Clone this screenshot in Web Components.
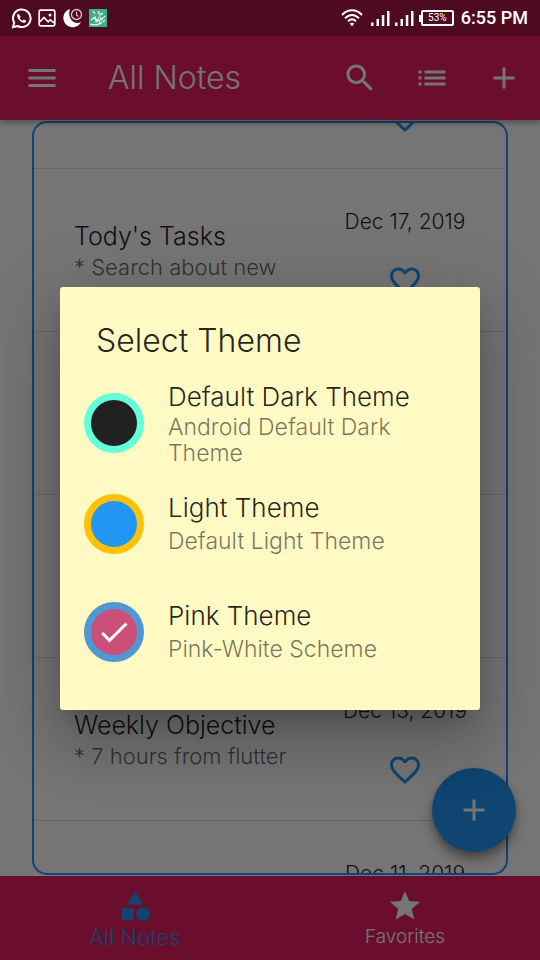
<!DOCTYPE html>
<html lang="en">
<head>
<meta charset="utf-8">
<meta name="viewport" content="width=device-width, initial-scale=1">
<title>All Notes</title>
<style>
  body { margin: 0; background: #fff; font-family: Inter, "Open Sans", sans-serif; font-weight: 300; color: rgba(0,0,0,.87); }
</style>
</head>
<body>
<notes-app></notes-app>

<script>
const define = (name, html, setup) => {
  const tpl = document.createElement('template');
  tpl.innerHTML = '<style>*{box-sizing:border-box}svg{display:block;fill:currentColor}</style>' + html;
  customElements.define(name, class extends HTMLElement {
    constructor() {
      super();
      this.attachShadow({ mode: 'open' }).append(tpl.content.cloneNode(true));
    }
    connectedCallback() { if (setup) setup(this, this.shadowRoot); }
  });
};

const ICONS = {
  menu: 'M3 18h18v-2H3v2zm0-5h18v-2H3v2zm0-7v2h18V6H3z',
  search: 'M15.5 14h-.79l-.28-.27C15.41 12.59 16 11.11 16 9.5 16 5.91 13.09 3 9.5 3S3 5.91 3 9.5 5.91 16 9.5 16c1.61 0 3.09-.59 4.23-1.57l.27.28v.79l5 4.99L20.49 19l-4.99-5zm-6 0C7.01 14 5 11.99 5 9.5S7.01 5 9.5 5 14 7.01 14 9.5 11.99 14 9.5 14z',
  list: 'M3 13h2v-2H3v2zm0 4h2v-2H3v2zm0-8h2V7H3v2zm4 4h14v-2H7v2zm0 4h14v-2H7v2zM7 7v2h14V7H7z',
  add: 'M19 13h-6v6h-2v-6H5v-2h6V5h2v6h6v2z',
  heart: 'M16.5 3c-1.74 0-3.41.81-4.5 2.09C10.91 3.81 9.24 3 7.5 3 4.42 3 2 5.42 2 8.5c0 3.78 3.4 6.86 8.55 11.54L12 21.35l1.45-1.32C18.6 15.36 22 12.28 22 8.5 22 5.42 19.58 3 16.5 3zm-4.4 15.55l-.1.1-.1-.1C7.14 14.24 4 11.39 4 8.5 4 6.5 5.5 5 7.5 5c1.54 0 3.04.99 3.57 2.36h1.87C13.46 5.99 14.96 5 16.5 5c2 0 3.5 1.5 3.5 3.5 0 2.89-3.14 5.74-7.9 10.05z',
  category: 'M12 2l-5.5 9h11zM17.5 13a4.5 4.5 0 1 0 0 9a4.5 4.5 0 1 0 0-9zM3 13.5h8v8H3z',
  star: 'M12 17.27L18.18 21l-1.64-7.03L22 9.24l-7.19-.61L12 2 9.19 8.63 2 9.24l5.46 4.73L5.82 21z',
  check: 'M9 16.17L4.83 12l-1.42 1.41L9 19 21 7l-1.41-1.41z'
};

define('md-icon', `
  <style>:host{display:block;width:36px;height:36px}svg{width:100%;height:100%}</style>
  <svg viewBox="0 0 24 24" aria-hidden="true"><path/></svg>`,
  (el, root) => root.querySelector('path').setAttribute('d', ICONS[el.getAttribute('name')]));

define('status-bar', `
  <style>
    :host{display:flex;align-items:center;justify-content:space-between;height:36px;padding:0 12px 0 11px;background:#4e0a20;color:#fff;font:500 18px/24px Roboto,sans-serif}
    div{display:flex;align-items:center}
    .left{gap:6px}
    .right{gap:5px}
    .battery::before{content:"";width:2px;height:7px;background:#fff}
    .battery span{border:2px solid #fff;border-radius:2px;width:33px;height:16px;font-size:10px;line-height:12px;text-align:center;font-weight:400}
    .wifi{margin-right:3px}
    time{margin-left:2px}
  </style>
  <div class="left">
    <svg width="21" height="21" viewBox="0 0 21 21"><path d="M2 19.2l1.2-4.6A8.8 8.8 0 1 1 6.7 18z" fill="none" stroke="#fff" stroke-width="2"/><path d="M7.4 5.7c-.8.2-1.5 1.2-1.3 2.3.5 3.2 3.5 6.2 6.8 6.7 1.2.1 2.2-.7 2.3-1.9l-2.5-1.3-1.1 1.2c-1.3-.5-2.3-1.5-2.9-2.8l1-1.2z"/></svg>
    <svg width="18" height="18" viewBox="0 0 18 18"><rect x="1.2" y="1.2" width="15.6" height="15.6" rx="1.5" fill="none" stroke="#fff" stroke-width="1.7"/><path d="M2 12.8l4-4.3 4.2 4.3 2-2 3.8 3" fill="none" stroke="#fff" stroke-width="1.6"/><circle cx="12" cy="6" r="1.5"/></svg>
    <svg width="21" height="20" viewBox="0 0 21 20"><path d="M8 1A9.3 9.3 0 1 0 19 14C13 17.500 4.500 11 8 1z"/><circle cx="14.500" cy="6.500" r="5" fill="none" stroke="#dcc4cc" stroke-width="1.3"/><path d="M14.500 3.500v3.500l2 1.500" fill="none" stroke="#dcc4cc" stroke-width="1.2"/></svg>
    <svg width="18" height="18" viewBox="0 0 18 18"><path fill="#35b18f" d="M0 0h18v18H0z"/><path d="M1 15c5 2 12 0 15-4M2 11l4-3 1 4 4-5 1 4 4-4M10 2c-2 3 2 4 4 2M4 2l2 3M7 13l3-2 1 4" fill="none" stroke="#e5f2e8" stroke-width="1.3"/><path d="M3 5l3 1M7 3l1 4M13 13l3 1M8 9l5-2" fill="none" stroke="#9a8a58" stroke-width="1"/></svg>
  </div>
  <div class="right">
    <svg class="wifi" width="22" height="18" viewBox="0 0 22 18"><g fill="none" stroke="#fff" stroke-width="1.9"><path d="M1 6C7-.3 15-.3 21 6"/><path d="M4 9.3C8.400 4.800 13.600 4.800 18 9.300"/><path d="M7 12.300c2.600-2.600 5.400-2.600 8 0"/></g><path d="M11 17.300l-2.300-2.600c1.400-1.300 3.200-1.300 4.600 0z"/></svg>
    <svg width="19" height="16" viewBox="0 0 19 16"><path d="M0 12.500h2.500V16H0zM5.500 9H8v7H5.500zM10.800 5h2.500v11h-2.500zM16 1h2.500v15H16z"/></svg>
    <svg width="19" height="16" viewBox="0 0 19 16"><path d="M0 12.500h2.500V16H0zM5.500 9H8v7H5.500zM10.800 5h2.500v11h-2.500zM16 1h2.500v15H16z"/></svg>
    <div class="battery"><span>53%</span></div>
    <time>6:55 PM</time>
  </div>`);

define('icon-button', `
  <style>
    :host{display:block}
    button{display:grid;place-items:center;width:72px;height:100%;padding:0;border:0;background:none;color:inherit}
  </style>
  <button><slot></slot></button>`,
  (el, root) => root.querySelector('button').setAttribute('aria-label', el.getAttribute('label')));

define('app-bar', `
  <style>
    :host{display:flex;height:84px;padding-left:6px;background:#e91e63;color:#fff;box-shadow:0 3px 6px rgba(0,0,0,.3);position:relative;z-index:1}
    h1{flex:1;margin:0 0 0 30px;align-self:center;font-size:32px;line-height:36px;font-weight:300}
  </style>
  <icon-button label="Menu"><md-icon name="menu"></md-icon></icon-button>
  <h1><slot></slot></h1>
  <slot name="actions"></slot>`);

define('note-row', `
  <style>
    :host{display:flex;justify-content:space-between;height:163px;padding:40px 40px 0;border-bottom:1px solid rgba(0,0,0,.12)}
    .text{padding-top:12px;flex:1}
    h2{margin:0 0 2px;font-size:25px;line-height:30px;font-weight:300}
    p{margin:0;font-size:22px;line-height:28px;color:rgba(0,0,0,.6)}
    .side{display:flex;flex-direction:column;align-items:center;gap:28px;width:122px}
    .date{height:26px;font-size:21px;line-height:26px;white-space:nowrap}
    button{padding:0;border:0;background:none;color:#2196f3}
  </style>
  <div class="text"><h2><slot name="title"></slot></h2><p><slot></slot></p></div>
  <div class="side"><div class="date"><slot name="date"></slot></div>
    <button aria-label="Add to favorites"><md-icon name="heart"></md-icon></button></div>`);

define('note-list', `
  <style>
    :host{display:block;overflow:hidden;border:2px solid #2196f3;border-radius:15px}
    .scrolled{margin-top:-117px}
  </style>
  <div class="scrolled"><slot></slot></div>`);

define('fab-button', `
  <style>
    :host{position:absolute;right:24px;bottom:24px}
    button{display:grid;place-items:center;width:84px;height:84px;padding:0;border:0;border-radius:50%;background:#2196f3;color:#fff;box-shadow:0 5px 8px rgba(0,0,0,.3),0 9px 15px rgba(0,0,0,.2)}
  </style>
  <button aria-label="New note"><md-icon name="add"></md-icon></button>`);

define('nav-tab', `
  <style>
    :host{display:block;flex:1;color:#fff;--size:19px}
    :host([selected]){color:#2196f3;--size:22px}
    a{display:flex;flex-direction:column;align-items:center;height:84px;padding-top:12px;color:inherit;text-decoration:none;font-size:var(--size);line-height:26px}
  </style>
  <a href="#"><slot name="icon"></slot><span><slot></slot></span></a>`);

define('theme-option', `
  <style>
    :host{display:block}
    label{display:flex;align-items:center;gap:24px;min-height:108px;padding:4px 24px}
    .swatch{display:grid;flex:none;color:#fff}
    .swatch>*{grid-area:1/1;place-self:center}
    input{appearance:none;margin:0;width:60px;height:60px;border:7px solid var(--ring);border-radius:50%;background:var(--fill)}
    md-icon{display:none;pointer-events:none}
    :host([checked]) md-icon{display:block}
    .text{padding-bottom:3px}
    .name,.note{display:block}
    .name{font-size:26px;line-height:34px}
    .note{margin-top:3px;font-size:23px;line-height:26px;color:rgba(0,0,0,.54)}
    :host([compact]) label{min-height:94px}
    :host([compact]) .text{padding-bottom:0}
    :host([compact]) .note{margin-top:0}
  </style>
  <label><span class="swatch"><input type="radio" name="theme"><md-icon name="check"></md-icon></span>
    <span class="text"><span class="name"><slot name="name"></slot></span><span class="note"><slot></slot></span></span></label>`,
  (el, root) => { root.querySelector('input').checked = el.hasAttribute('checked'); });

define('theme-dialog', `
  <style>
    :host{position:absolute;inset:36px 0 0;z-index:2;display:grid;align-items:center;padding:0 60px;background:rgba(0,0,0,.54)}
    section{padding-bottom:24px;border-radius:3px;background:#fff9c4;box-shadow:0 16px 22px -10px rgba(0,0,0,.2),0 36px 57px 4px rgba(0,0,0,.14),0 14px 69px 12px rgba(0,0,0,.12)}
    h2{margin:0;padding:37px 36px 18px;font-size:32px;line-height:34px;font-weight:300}
  </style>
  <section role="dialog" aria-labelledby="t"><h2 id="t">Select Theme</h2><slot></slot></section>`);

define('notes-app', `
  <style>
    :host{display:flex;flex-direction:column;height:100vh;position:relative;overflow:hidden}
    main{flex:1;min-height:0;display:grid;padding:1px 32px;position:relative}
    note-list{min-height:0}
    nav{display:flex;background:#e91e63}
  </style>
  <status-bar></status-bar>
  <app-bar>All Notes
    <icon-button slot="actions" label="Search"><md-icon name="search"></md-icon></icon-button>
    <icon-button slot="actions" label="List view"><md-icon name="list"></md-icon></icon-button>
    <icon-button slot="actions" label="Add note"><md-icon name="add"></md-icon></icon-button>
  </app-bar>
  <main>
    <note-list>
      <note-row></note-row>
      <note-row><span slot="title">Tody's Tasks</span><span slot="date">Dec 17, 2019</span>* Search about new</note-row>
      <note-row></note-row>
      <note-row></note-row>
      <note-row><span slot="title">Weekly Objective</span><span slot="date">Dec 13, 2019</span>* 7 hours from flutter</note-row>
      <note-row><span slot="date">Dec 11, 2019</span></note-row>
    </note-list>
    <fab-button></fab-button>
  </main>
  <nav>
    <nav-tab selected><md-icon slot="icon" name="category"></md-icon>All Notes</nav-tab>
    <nav-tab><md-icon slot="icon" name="star"></md-icon>Favorites</nav-tab>
  </nav>
  <theme-dialog>
    <theme-option compact style="--ring:#64ffda;--fill:#212121"><span slot="name">Default Dark Theme</span>Android Default Dark Theme</theme-option>
    <theme-option style="--ring:#ffc107;--fill:#2196f3"><span slot="name">Light Theme</span>Default Light Theme</theme-option>
    <theme-option checked style="--ring:#4f98d3;--fill:#cb4f78"><span slot="name">Pink Theme</span>Pink-White Scheme</theme-option>
  </theme-dialog>`);
</script>
</body>
</html>
